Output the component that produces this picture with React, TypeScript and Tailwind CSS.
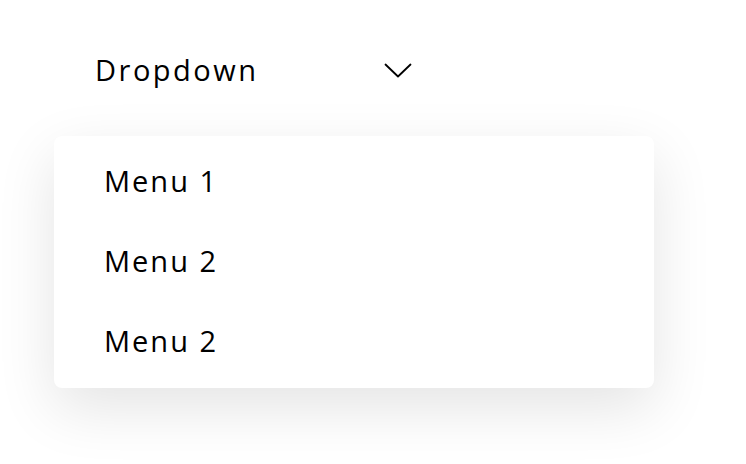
import React from 'react'

const items = ['Menu 1', 'Menu 2', 'Menu 2']

const Chevron = () => (
    <svg width="28" height="16" viewBox="0 0 28 16" fill="none" className="shrink-0">
        <path d="M1.5 1.5L14 13.5L26.5 1.5" stroke="#000" strokeWidth="1.8" strokeLinecap="round" strokeLinejoin="round" />
    </svg>
)

export default function App() {
    return (
        <div className="w-[746px] h-[464px] bg-white overflow-hidden" style={{ fontFamily: '"Open Sans", sans-serif' }}>
            {/* trigger */}
            <div className="flex items-center justify-between h-[40px] mt-[51px] ml-[95px] w-[317px]">
                <span className="text-[29px] leading-none tracking-[2.5px] text-black -mt-[3px]">Dropdown</span>
                <Chevron />
            </div>

            {/* menu panel */}
            <div className="mt-[45px] ml-[54px] w-[600px] h-[252px] bg-white rounded-lg pt-[4px] pb-[8px] shadow-[0_20px_60px_rgba(0,0,0,0.11)]">
                {items.map((label, i) => (
                    <div key={i} className="h-20 flex items-center pl-[50px]">
                        <span className="text-[29px] leading-none tracking-[2px] text-black">{label}</span>
                    </div>
                ))}
            </div>
        </div>
    )
}
